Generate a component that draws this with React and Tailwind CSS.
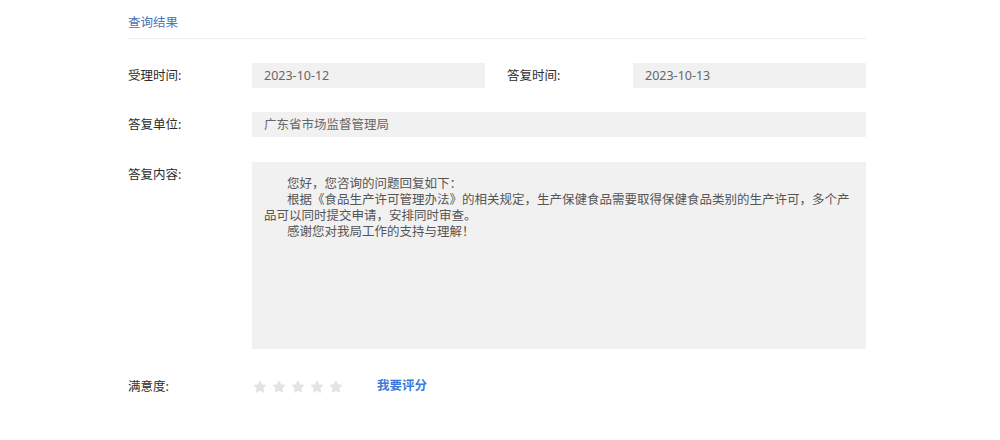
import React from "react";

const font = {
  fontFamily: '"Noto Sans", "Noto Sans CJK SC", sans-serif',
};

function Star() {
  return (
    <svg width="14" height="14" viewBox="0 0 24 24" className="shrink-0">
      <path
        d="M12 1.5l3.1 6.6 7.2.9-5.3 5 1.4 7.1L12 17.6l-6.4 3.5 1.4-7.1-5.3-5 7.2-.9z"
        fill="#e3e3e3"
        stroke="#e3e3e3"
        strokeWidth="1.5"
        strokeLinejoin="round"
      />
    </svg>
  );
}

function Field({ children, className = "" }) {
  return (
    <div
      className={
        "h-[25px] leading-[25px] bg-[#f1f1f1] px-[12px] text-[#666] " + className
      }
    >
      {children}
    </div>
  );
}

function Label({ children, className = "" }) {
  return (
    <div className={"h-[25px] leading-[25px] text-[#2b2b2b] " + className}>{children}</div>
  );
}

export default function App() {
  const lines = [
    "您好，您咨询的问题回复如下：",
    "根据《食品生产许可管理办法》的相关规定，生产保健食品需要取得保健食品类别的生产许可，多个产品可以同时提交申请，安排同时审查。",
    "感谢您对我局工作的支持与理解！",
  ];

  return (
    <div className="w-[1000px] h-[440px] bg-white text-[12.5px]" style={font}>
      <div className="ml-[128px] w-[738px]">
        <div className="pt-[15px] pb-[8px] leading-[15px] text-[#4a73b8] border-b border-[#eeeeee]">
          查询结果
        </div>

        <div className="mt-[24px] flex">
          <Label className="w-[124px]">受理时间:</Label>
          <Field className="w-[233px]">2023-10-12</Field>
          <Label className="ml-[22px] w-[126px]">答复时间:</Label>
          <Field className="w-[233px]">2023-10-13</Field>
        </div>

        <div className="mt-[24px] flex">
          <Label className="w-[124px]">答复单位:</Label>
          <Field className="flex-1">广东省市场监督管理局</Field>
        </div>

        <div className="mt-[25px] flex">
          <Label className="w-[124px]">答复内容:</Label>
          <div className="flex-1 h-[187px] bg-[#f1f1f1] px-[12px] pt-[14px] leading-[16px] text-[#555]">
            {lines.map((t) => (
              <p key={t} className="indent-[23px]">
                {t}
              </p>
            ))}
          </div>
        </div>

        <div className="mt-[25px] flex items-center h-[25px]">
          <Label className="w-[125px]">满意度:</Label>
          <div className="flex items-center gap-[5px]">
            <Star />
            <Star />
            <Star />
            <Star />
            <Star />
          </div>
          <span className="ml-[34px] text-[#3a7bd8] font-semibold cursor-pointer">
            我要评分
          </span>
        </div>
      </div>
    </div>
  );
}
